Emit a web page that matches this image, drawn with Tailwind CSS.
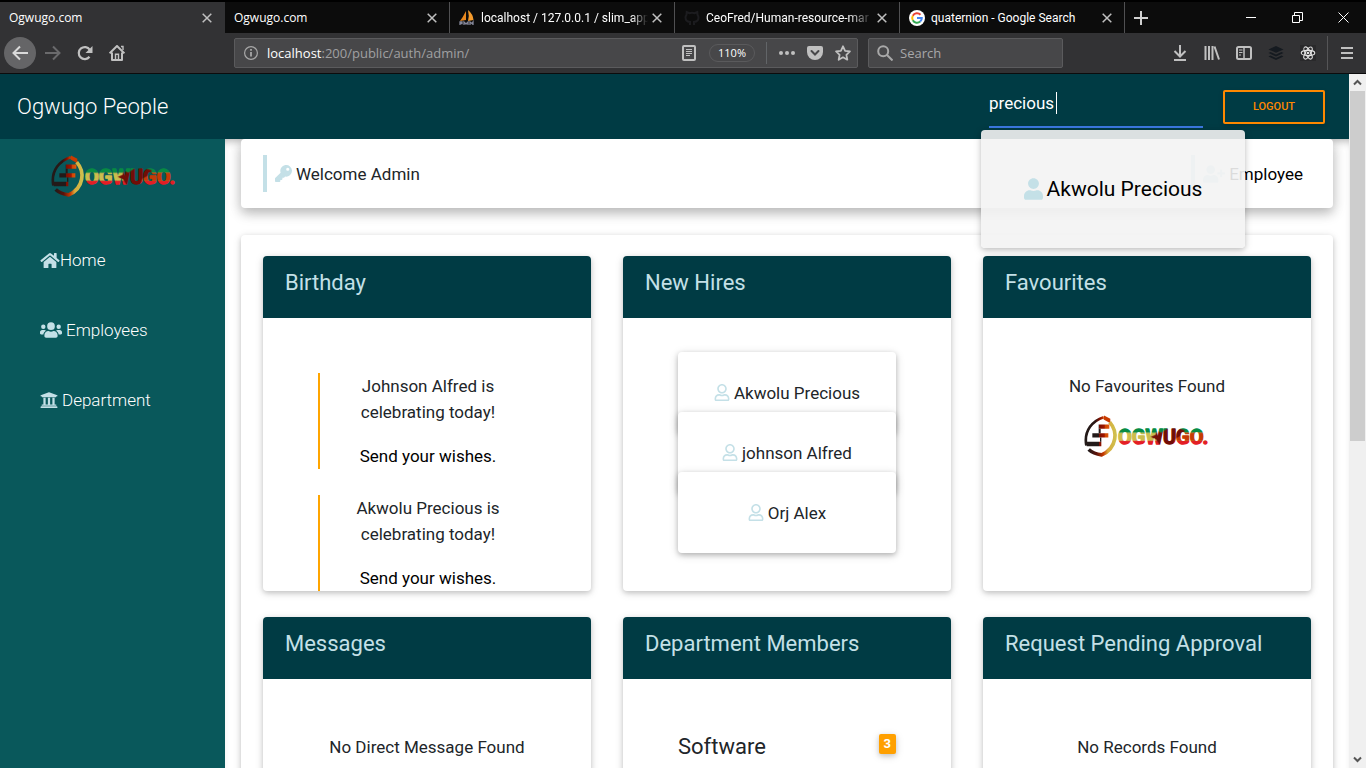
<!DOCTYPE html>
<html lang="en">
<head>
<meta charset="utf-8">
<meta name="viewport" content="width=device-width, initial-scale=1">
<title>Ogwugo.com</title>
<script src="https://cdn.jsdelivr.net/npm/@tailwindcss/browser@4"></script>
</head>
<body class="flex h-screen flex-col overflow-hidden bg-white font-['Roboto',sans-serif] text-[17px] leading-[26px] text-[#212529]">

<!-- Shared drawings -->
<svg class="absolute h-0 w-0" aria-hidden="true">
  <defs>
    <linearGradient id="arcLeft" x1="0" x2="1" y1="0" y2="0"><stop offset="0" stop-color="#231a19"/><stop offset=".55" stop-color="#2b1714"/><stop offset=".8" stop-color="#8c1000"/><stop offset="1" stop-color="#cf4200"/></linearGradient>
    <linearGradient id="arcRight" gradientUnits="userSpaceOnUse" x1="14" x2="94" y1="0" y2="0"><stop offset="0" stop-color="#231a19"/><stop offset=".3" stop-color="#5c1109"/><stop offset=".55" stop-color="#c63900"/><stop offset=".72" stop-color="#d9ab3d"/><stop offset="1" stop-color="#cfc04d"/></linearGradient>
    <linearGradient id="bar" gradientUnits="userSpaceOnUse" x1="10" x2="78" y1="0" y2="0"><stop offset="0" stop-color="#231a19"/><stop offset=".5" stop-color="#231a19"/><stop offset=".52" stop-color="#7c0e00"/><stop offset=".75" stop-color="#a01600"/><stop offset=".78" stop-color="#d04600"/><stop offset="1" stop-color="#e05a10"/></linearGradient>
    <pattern id="flag" patternUnits="userSpaceOnUse" width="400" height="130">
      <rect width="400" height="52" fill="#078a43"/>
      <rect y="52" width="400" height="24" fill="#ccbd4d"/>
      <rect y="76" width="400" height="54" fill="#e41d25"/>
      <path d="M262 52h138v24H262z" fill="#c53a05"/>
      <path d="M200 64l14-6 6-12 12 6 20-14 22-2 28 8-4 12-24 14-8 22-18 6-20-8-12-18z" fill="#720d06"/>
    </pattern>
    <symbol id="logo" viewBox="0 0 378 123">
      <path d="M59 5Q33 13 18 34Q1 58 7 90" fill="none" stroke="url(#arcLeft)" stroke-width="8"/>
      <path d="M60 0l19 10v13L59 12z" fill="#c93b00"/>
      <path d="M77 20Q97 43 92 71Q86 104 53 118Q28 115 14 102" fill="none" stroke="url(#arcRight)" stroke-width="11"/>
      <path d="M44 27h32v13H44zM25 53h48v13H25zM8 79h44v13H8z" fill="url(#bar)"/>
      <path d="M44 40h6v13h-6zM48 66h4v13h-4z" fill="#231a19"/>
      <text x="102" y="86" font-family="Roboto, Liberation Sans" font-weight="700" font-size="60" fill="url(#flag)" stroke="url(#flag)" stroke-width="4" stroke-linejoin="round">OGWUGO.</text>
    </symbol>
    <symbol id="close" viewBox="0 0 10 10"><path d="M.7.7l8.6 8.6M9.3.7L.7 9.3" fill="none" stroke="currentColor" stroke-width="1.5"/></symbol>
    <symbol id="user-outline" viewBox="0 0 448 512"><path fill="currentColor" d="M313.600 304c-28.700 0-42.500 16-89.600 16-47.100 0-60.800-16-89.600-16C60.200 304 0 364.200 0 438.400V464c0 26.500 21.500 48 48 48h352c26.500 0 48-21.500 48-48v-25.600c0-74.200-60.200-134.400-134.400-134.400zM400 464H48v-25.600c0-47.600 38.800-86.400 86.400-86.400 14.600 0 38.300 16 89.600 16 51.700 0 74.900-16 89.600-16 47.600 0 86.400 38.800 86.400 86.400V464zM224 288c79.500 0 144-64.500 144-144S303.500 0 224 0 80 64.500 80 144s64.500 144 144 144zm0-240c52.900 0 96 43.100 96 96s-43.100 96-96 96-96-43.100-96-96 43.100-96 96-96z"/></symbol>
    <symbol id="user" viewBox="0 0 448 512"><path fill="currentColor" d="M224 256c70.700 0 128-57.300 128-128S294.700 0 224 0 96 57.300 96 128s57.300 128 128 128zm89.600 32h-16.700c-22.200 10.200-46.900 16-72.900 16s-50.600-5.800-72.900-16h-16.700C60.200 288 0 348.200 0 422.400V464c0 26.500 21.500 48 48 48h352c26.500 0 48-21.500 48-48v-41.600c0-74.200-60.200-134.400-134.400-134.400z"/></symbol>
  </defs>
</svg>

<!-- Tab strip -->
<div class="flex h-[33px] shrink-0 border-t-2 border-black bg-[#0c0c0c] text-[12px] leading-[16px] text-white">
  <div class="flex w-[225px] items-center bg-[#323234] pr-[13px] pl-[9px] font-['Open_Sans',sans-serif]"><span class="flex-1">Ogwugo.com</span><button aria-label="Close tab" class="text-[#c0c0c0]"><svg class="size-[10px]"><use href="#close"/></svg></button></div>
  <div class="flex w-[225px] items-center border-r border-[#505052] pr-[12px] pl-[9px] font-['Open_Sans',sans-serif]"><span class="flex-1">Ogwugo.com</span><button aria-label="Close tab" class="text-[#c0c0c0]"><svg class="size-[10px]"><use href="#close"/></svg></button></div>
  <div class="flex w-[225px] items-center border-r border-[#505052] pr-[12px] pl-[9px]">
    <svg class="mr-[6px] size-4 shrink-0" viewBox="0 0 16 16"><path d="M7 1v9l-6 1Q4 7 7 1z" fill="#e8871e"/><path d="M9 0q5 4 5.500 10L9 11q1.500-5 0-11z" fill="#f59b2c"/><path d="M1 15v-3h2v1.500H1M5 15v-3l2 2 2-2v3M11 15v-3l2 1.500 1-1.500v3" fill="none" stroke="#85879a" stroke-width="1.300"/></svg>
    <span class="min-w-0 flex-1 whitespace-nowrap mask-r-from-90%">localhost / 127.0.0.1 / slim_app</span><button aria-label="Close tab" class="ml-1 text-[#c0c0c0]"><svg class="size-[10px]"><use href="#close"/></svg></button></div>
  <div class="flex w-[225px] items-center border-r border-[#505052] pr-[12px] pl-[9px]">
    <svg class="mr-[6px] size-4 shrink-0" viewBox="0 0 16 16"><path d="M6 15v-3c-4-.5-4.500-3-4.500-4.500 0-1 .4-2 1-2.700L2.700 2l2.600 1.200a9 9 0 0 1 5.400 0L13.300 2l.2 2.800c.6.700 1 1.700 1 2.700 0 1.500-.5 4-4.500 4.500v3" fill="none" stroke="#1c1c1f" stroke-width="2"/></svg>
    <span class="min-w-0 flex-1 whitespace-nowrap mask-r-from-85%">CeoFred/Human-resource-mar</span><button aria-label="Close tab" class="ml-1 text-[#c0c0c0]"><svg class="size-[10px]"><use href="#close"/></svg></button></div>
  <div class="flex w-[225px] items-center border-r border-[#505052] pr-[12px] pl-[9px]">
    <svg class="mr-[6px] size-4 shrink-0" viewBox="0 0 16 16"><circle cx="8" cy="8" r="8" fill="#fff"/><g fill="none" stroke-width="2"><path d="M11.500 4.700A4.800 4.800 0 0 0 3.800 5.700" stroke="#ea4335"/><path d="M3.800 5.700a4.800 4.800 0 0 0 0 4.600" stroke="#fbbc05"/><path d="M3.800 10.300a4.800 4.800 0 0 0 7.400 1.300" stroke="#34a853"/><path d="M11.200 11.600A4.700 4.700 0 0 0 12.800 8H8" stroke="#4285f4"/></g></svg>
    <span class="min-w-0 flex-1 whitespace-nowrap">quaternion - Google Search</span><button aria-label="Close tab" class="ml-1 text-[#c0c0c0]"><svg class="size-[10px]"><use href="#close"/></svg></button></div>
  <button aria-label="New tab" class="ml-[9px] text-[#d0d0d0]"><svg class="size-[14px]" viewBox="0 0 14 14"><path d="M7 0v14M0 7h14" stroke="currentColor" stroke-width="2"/></svg></button>
  <div class="ml-auto flex items-center gap-[35px] pr-[17px]">
    <button aria-label="Minimize"><svg class="size-[11px]" viewBox="0 0 11 11"><path d="M0 5.500h10" stroke="#fff"/></svg></button>
    <button aria-label="Restore"><svg class="size-[11px]" viewBox="0 0 11 11"><path d="M.5 3.500h7v7h-7zM2.500 3.500v-3h8v8h-3" fill="none" stroke="#fff"/></svg></button>
    <button aria-label="Close window"><svg class="size-[11px]" viewBox="0 0 11 11"><path d="M.5.5l10 10M10.500.5l-10 10" stroke="#fff"/></svg></button>
  </div>
</div>

<!-- Browser toolbar -->
<div class="flex h-[41px] shrink-0 items-center border-b border-[#0c0c0d] bg-[#323234] pl-1 font-['Open_Sans',sans-serif] text-[#c0c0c0]">
  <button aria-label="Back" class="grid size-8 place-items-center rounded-full bg-[#656567] text-[#dadada]"><svg class="size-4" viewBox="0 0 16 16"><path d="M16 8H1.500M8 1.500L1.500 8 8 14.500" fill="none" stroke="currentColor" stroke-width="2"/></svg></button>
  <button aria-label="Forward" class="ml-[9px] text-[#6a6a6c]"><svg class="size-4" viewBox="0 0 16 16"><path d="M0 8h14.500M8 1.500L14.500 8 8 14.500" fill="none" stroke="currentColor" stroke-width="2"/></svg></button>
  <button aria-label="Reload" class="ml-4"><svg class="size-4" viewBox="0 0 16 16"><path d="M12.500 11.800a6 6 0 1 1 .3-7" fill="none" stroke="currentColor" stroke-width="2.200"/><path d="M15.500 1v7h-7z" fill="currentColor"/></svg></button>
  <button aria-label="Home" class="ml-4"><svg class="size-4" viewBox="0 0 16 16"><path d="M.6 8.300L8 1l7.400 7.300M3 7.500V15h10V7.500" fill="none" stroke="currentColor" stroke-width="2" stroke-linejoin="round"/><path d="M6.500 14.500V9.300h3v5.200M12 1.500h2V5" fill="none" stroke="currentColor" stroke-width="1.400"/></svg></button>
  <div class="ml-[109px] flex h-[30px] min-w-0 flex-1 items-center rounded-xs border border-[#5b5b5d] bg-[#474749] pr-[6px] pl-[9px]">
    <svg class="size-[14px] shrink-0" viewBox="0 0 14 14" fill="none" stroke="#a8a8a8"><circle cx="7" cy="7" r="6.400" stroke-width="1.200"/><path d="M7 6v4.500M7 3v1.700" stroke-width="1.800"/></svg>
    <a href="#" class="ml-[9px] flex-1 text-[13px] leading-[18px] text-[#a0a0a2]"><span class="text-white">localhost</span>:200/public/auth/admin/</a>
    <button aria-label="Reader view"><svg class="size-4" viewBox="0 0 16 16" fill="none" stroke="currentColor"><rect x="2" y="1" width="12" height="14" rx="1" stroke-width="2"/><path d="M5 4.500h6M5 6.500h6M5 8.500h6M5 10.500h4"/></svg></button>
    <button class="ml-3 h-[18px] rounded-full border border-[#5a5a5c] px-[8px] text-[11px] leading-[16px] text-white">110%</button>
    <span class="ml-[11px] h-[22px] w-px bg-[#626568]"></span>
    <button aria-label="Page actions" class="ml-3"><svg class="size-4" viewBox="0 0 16 16" fill="currentColor"><circle cx="2" cy="8" r="2"/><circle cx="8" cy="8" r="2"/><circle cx="14" cy="8" r="2"/></svg></button>
    <button aria-label="Save to Pocket" class="ml-3"><svg class="size-4" viewBox="0 0 16 16"><path d="M2 1h12q2 0 2 2v4a8 8 0 0 1-16 0V3q0-2 2-2z" fill="currentColor"/><path d="M4.500 6L8 9.500 11.500 6" fill="none" stroke="#474749" stroke-width="2" stroke-linecap="round"/></svg></button>
    <button aria-label="Bookmark" class="ml-3"><svg class="size-4" viewBox="0 0 16 16"><path d="M8 1.300l2.100 4.500 4.800.6-3.500 3.400.9 4.900L8 12.300l-4.300 2.400.9-4.900L1.100 6.400l4.800-.6z" fill="none" stroke="currentColor" stroke-width="1.800" stroke-linejoin="round"/></svg></button>
  </div>
  <label class="ml-[10px] flex h-[30px] w-[195px] items-center rounded-xs border border-[#5b5b5d] bg-[#474749] pl-2">
    <svg class="size-4 shrink-0" viewBox="0 0 16 16" fill="none" stroke="#a8a8a8" stroke-width="2"><circle cx="6.200" cy="6.200" r="5"/><path d="M10 10l5.500 5.500"/></svg>
    <input aria-label="Search the web" placeholder="Search" class="ml-[7px] w-36 bg-transparent text-[13px] leading-[18px] outline-none placeholder:text-[#a8a8aa]">
  </label>
  <div class="ml-[109px] flex items-center gap-4">
    <button aria-label="Downloads"><svg class="size-4" viewBox="0 0 16 16"><path d="M8 0v11M2.500 6L8 11.500 13.500 6M2 15h12" fill="none" stroke="currentColor" stroke-width="2"/></svg></button>
    <button aria-label="Library"><svg class="size-4" viewBox="0 0 16 16"><path d="M1.500 1v14M5 1v14M8.500 1v14M10.500 1.500l4.500 13" fill="none" stroke="currentColor" stroke-width="2"/></svg></button>
    <button aria-label="Sidebars"><svg class="size-4" viewBox="0 0 16 16" fill="none" stroke="currentColor"><rect x="1" y="2" width="14" height="12" rx="1.500" stroke-width="2"/><path d="M8 2v12" stroke-width="1.500"/><path d="M3 5h3.500M3 7.500h3.500M3 10h2"/></svg></button>
    <button aria-label="Buffer"><svg class="size-4" viewBox="0 0 16 16" fill="#151a20"><path d="M8 1l7.500 3.400L8 7.800.5 4.400z"/><path d="M.5 8l2-1L8 9.500 13.500 7l2 1L8 11.400zM.5 11.500l2-1L8 13l5.500-2.500 2 1L8 15z"/></svg></button>
    <button aria-label="React tools" class="bg-[#29292b]"><svg class="size-4" viewBox="0 0 16 16" fill="none" stroke="#e4e4e4" stroke-width="1.100"><ellipse cx="8" cy="8" rx="6.800" ry="2.600"/><ellipse cx="8" cy="8" rx="6.800" ry="2.600" transform="rotate(60 8 8)"/><ellipse cx="8" cy="8" rx="6.800" ry="2.600" transform="rotate(120 8 8)"/><circle cx="8" cy="8" r=".8" fill="#fff"/></svg></button>
  </div>
  <span class="ml-[11px] h-[34px] w-px bg-[#555557]"></span>
  <button aria-label="Menu" class="mr-3 ml-3"><svg class="size-[14px]" viewBox="0 0 14 14"><path d="M1 2h12M1 7h12M1 12h12" stroke="currentColor" stroke-width="2"/></svg></button>
</div>

<div class="flex min-h-0 flex-1">
  <div class="flex min-w-0 flex-1 flex-col">
    <!-- App bar -->
    <header class="relative z-10 flex h-[65px] shrink-0 items-center bg-[#003b44] pr-6 pl-[17px]">
      <a href="#" class="flex-1 text-[22px] font-light text-white">Ogwugo People</a>
      <div class="relative w-[214px] self-start">
        <input aria-label="Search people" value="precious" class="block h-[54px] w-full border-b-2 border-[#3b78e0] bg-transparent pt-[6px] text-[17px] text-white outline-none">
        <span class="absolute top-[18px] left-[67px] h-[22px] w-px bg-white"></span>
        <a href="#" class="absolute top-[56px] -left-2 flex h-[118px] w-[264px] items-center justify-center gap-1 rounded bg-[#f3f3f3]/90 text-[21px] text-black shadow-[0_2px_5px_rgba(0,0,0,.16),0_2px_10px_rgba(0,0,0,.12)]">
          <svg class="h-[22px] w-[19px] text-[#c4e0e7]"><use href="#user"/></svg>Akwolu Precious
        </a>
      </div>
      <button class="ml-5 h-[34px] w-[102px] rounded-xs border-2 border-[#ff8800] text-[11px] font-medium text-[#ff8800] shadow-[0_2px_5px_rgba(0,0,0,.16)]">LOGOUT</button>
    </header>

    <div class="flex min-h-0 flex-1">
      <!-- Side navigation -->
      <aside class="w-[225px] shrink-0 bg-[#09585b] pt-4">
        <svg class="ml-[51px] h-[42px] w-[126px]" role="img" aria-label="Ogwugo"><use href="#logo"/></svg>
        <nav class="mt-7 pl-10 font-light text-white">
          <a href="#" class="flex h-[70px] items-center"><svg class="h-[17px] w-5 text-[#c4e0e7]" viewBox="0 0 576 512" fill="currentColor"><path d="M280.400 148.300L96 300.100V464a16 16 0 0 0 16 16l112-.3a16 16 0 0 0 16-16V368a16 16 0 0 1 16-16h64a16 16 0 0 1 16 16v95.600a16 16 0 0 0 16 16.100L464 480a16 16 0 0 0 16-16V300L295.700 148.300a12.200 12.200 0 0 0-15.300 0zM571.600 251.500L488 182.600V44a12 12 0 0 0-12-12h-56a12 12 0 0 0-12 12v72.600L318.500 43a48 48 0 0 0-61 0L4.300 251.500a12 12 0 0 0-1.600 16.900l25.500 31A12 12 0 0 0 45.200 301l235.200-193.700a12.200 12.200 0 0 1 15.300 0L530.900 301a12 12 0 0 0 16.900-1.600l25.500-31a12 12 0 0 0-1.700-16.900z"/></svg>Home</a>
          <a href="#" class="flex h-[70px] items-center gap-1"><svg class="h-[18px] w-[22px] text-[#c4e0e7]" viewBox="0 0 640 512" fill="currentColor"><path d="M96 224a64 64 0 1 0 0-128 64 64 0 0 0 0 128zm448 0a64 64 0 1 0 0-128 64 64 0 0 0 0 128zm32 32h-64c-17.600 0-33.500 7.100-45.100 18.600 40.300 22.100 68.900 62 75.100 109.400h66c17.700 0 32-14.300 32-32v-32c0-35.300-28.700-64-64-64zm-256 0a112 112 0 1 0 0-224 112 112 0 0 0 0 224zm76.800 32h-8.300c-20.800 10-43.900 16-68.500 16s-47.600-6-68.500-16h-8.300C179.600 288 128 339.600 128 403.200V432c0 26.500 21.500 48 48 48h288c26.500 0 48-21.500 48-48v-28.800c0-63.600-51.600-115.200-115.200-115.200zm-223.700-13.400C161.500 263.100 145.600 256 128 256H64c-35.300 0-64 28.700-64 64v32c0 17.700 14.300 32 32 32h65.900c6.300-47.400 34.900-87.300 75.200-109.400z"/></svg>Employees</a>
          <a href="#" class="flex h-[70px] items-center gap-1"><svg class="size-[18px] text-[#c4e0e7]" viewBox="0 0 512 512" fill="currentColor"><path d="M496 128v16a8 8 0 0 1-8 8h-24v12c0 6.600-5.400 12-12 12H60c-6.600 0-12-5.400-12-12v-12H24a8 8 0 0 1-8-8v-16a8 8 0 0 1 4.900-7.400l232-88a8 8 0 0 1 6.100 0l232 88A8 8 0 0 1 496 128zm-24 304H40c-13.300 0-24 10.700-24 24v16a8 8 0 0 0 8 8h464a8 8 0 0 0 8-8v-16c0-13.300-10.700-24-24-24zM96 192v192H60c-6.600 0-12 5.400-12 12v20h416v-20c0-6.600-5.400-12-12-12h-36V192h-64v192h-64V192h-64v192h-64V192H96z"/></svg>Department</a>
        </nav>
      </aside>

      <!-- Dashboard -->
      <main class="min-w-0 flex-1 overflow-hidden px-4 shadow-[inset_0_7px_8px_-5px_rgba(0,0,0,.3)]">
        <section class="flex justify-between rounded bg-white px-[22px] py-4 shadow-[0_5px_11px_rgba(0,0,0,.18),0_4px_15px_rgba(0,0,0,.15)]">
          <div class="flex h-[37px] items-center gap-1 border-l-4 border-[#c4e0e7] px-2"><svg class="size-[17px] text-[#c4e0e7]" viewBox="0 0 512 512" fill="currentColor"><path d="M512 176a176 176 0 0 1-208.900 173L279 376a24 24 0 0 1-18 8h-37v40a24 24 0 0 1-24 24h-40v40a24 24 0 0 1-24 24H24a24 24 0 0 1-24-24v-78a24 24 0 0 1 7-17l161.800-161.800A176 176 0 1 1 512 176zm-176-48a48 48 0 1 0 96 0 48 48 0 0 0-96 0z"/></svg>Welcome Admin</div>
          <a href="#" class="flex h-[37px] items-center gap-1 border-l-4 border-[#c4e0e7] px-2 text-black"><svg class="h-[18px] w-[22px] text-[#c4e0e7]" viewBox="0 0 640 512" fill="currentColor"><path d="M624 208h-64v-64a16 16 0 0 0-16-16h-32a16 16 0 0 0-16 16v64h-64a16 16 0 0 0-16 16v32a16 16 0 0 0 16 16h64v64a16 16 0 0 0 16 16h32a16 16 0 0 0 16-16v-64h64a16 16 0 0 0 16-16v-32a16 16 0 0 0-16-16zM224 256a128 128 0 1 0 0-256 128 128 0 0 0 0 256zm89.600 32h-16.700a174 174 0 0 1-145.800 0h-16.700C60.200 288 0 348.200 0 422.400V464c0 26.500 21.500 48 48 48h352c26.500 0 48-21.500 48-48v-41.600c0-74.200-60.200-134.400-134.400-134.400z"/></svg>Employee</a>
        </section>

        <section class="mt-[27px] grid grid-cols-3 gap-x-8 gap-y-[26px] rounded bg-white px-[22px] py-[21px] shadow-[0_2px_5px_rgba(0,0,0,.16),0_2px_10px_rgba(0,0,0,.12)]">
          <article class="flex h-[335px] flex-col overflow-hidden rounded bg-white shadow-[0_2px_5px_rgba(0,0,0,.16),0_2px_10px_rgba(0,0,0,.12)]">
            <h2 class="h-[62px] shrink-0 bg-[#003b44] px-[22px] pt-[14px] text-[22px] text-[#c4e0e7]">Birthday</h2>
            <div class="flex flex-col gap-[26px] p-[55px] text-center">
              <div class="border-l-2 border-[#ffa500]"><p class="mx-auto mb-[18px] w-[180px]">Johnson Alfred is celebrating today!</p><a href="#" class="block text-black">Send your wishes.</a></div>
              <div class="border-l-2 border-[#ffa500]"><p class="mx-auto mb-[18px] w-[180px]">Akwolu Precious is celebrating today!</p><a href="#" class="block text-black">Send your wishes.</a></div>
            </div>
          </article>
          <article class="h-[335px] overflow-hidden rounded bg-white shadow-[0_2px_5px_rgba(0,0,0,.16),0_2px_10px_rgba(0,0,0,.12)]">
            <h2 class="h-[62px] bg-[#003b44] px-[22px] pt-[14px] text-[22px] text-[#c4e0e7]">New Hires</h2>
            <div class="px-[55px] pt-[34px]">
              <div class="flex h-[81px] items-center justify-center gap-1 rounded bg-white shadow-[0_2px_5px_rgba(0,0,0,.2),0_2px_10px_rgba(0,0,0,.16)]"><svg class="h-[17px] w-4 text-[#c4e0e7]"><use href="#user-outline"/></svg>Akwolu Precious</div>
              <div class="relative -mt-[21px] flex h-[81px] items-center justify-center gap-1 rounded bg-white shadow-[0_2px_5px_rgba(0,0,0,.2),0_2px_10px_rgba(0,0,0,.16)]"><svg class="h-[17px] w-4 text-[#c4e0e7]"><use href="#user-outline"/></svg>johnson Alfred</div>
              <div class="relative -mt-[21px] flex h-[81px] items-center justify-center gap-1 rounded bg-white shadow-[0_2px_5px_rgba(0,0,0,.2),0_2px_10px_rgba(0,0,0,.16)]"><svg class="h-[17px] w-4 text-[#c4e0e7]"><use href="#user-outline"/></svg>Orj Alex</div>
            </div>
          </article>
          <article class="h-[335px] overflow-hidden rounded bg-white shadow-[0_2px_5px_rgba(0,0,0,.16),0_2px_10px_rgba(0,0,0,.12)]">
            <h2 class="h-[62px] bg-[#003b44] px-[22px] pt-[14px] text-[22px] text-[#c4e0e7]">Favourites</h2>
            <div class="flex flex-col items-center gap-4 pt-[55px]"><p>No Favourites Found</p><svg class="h-[42px] w-[126px]" role="img" aria-label="Ogwugo"><use href="#logo"/></svg></div>
          </article>
          <article class="h-[335px] overflow-hidden rounded bg-white shadow-[0_2px_5px_rgba(0,0,0,.16),0_2px_10px_rgba(0,0,0,.12)]">
            <h2 class="h-[62px] bg-[#003b44] px-[22px] pt-[14px] text-[22px] text-[#c4e0e7]">Messages</h2>
            <p class="pt-[55px] text-center">No Direct Message Found</p>
          </article>
          <article class="h-[335px] overflow-hidden rounded bg-white shadow-[0_2px_5px_rgba(0,0,0,.16),0_2px_10px_rgba(0,0,0,.12)]">
            <h2 class="h-[62px] bg-[#003b44] px-[22px] pt-[14px] text-[22px] text-[#c4e0e7]">Department Members</h2>
            <div class="flex items-start justify-between px-[55px] pt-[55px]"><h3 class="text-[22px]">Software</h3><span class="rounded-xs bg-[#ffa000] px-[5px] text-[13px] leading-[20px] font-bold text-white shadow-[0_2px_5px_rgba(0,0,0,.16),0_2px_10px_rgba(0,0,0,.12)]">3</span></div>
          </article>
          <article class="h-[335px] overflow-hidden rounded bg-white shadow-[0_2px_5px_rgba(0,0,0,.16),0_2px_10px_rgba(0,0,0,.12)]">
            <h2 class="h-[62px] bg-[#003b44] px-[22px] pt-[14px] text-[22px] text-[#c4e0e7]">Request Pending Approval</h2>
            <p class="pt-[55px] text-center">No Records Found</p>
          </article>
        </section>
      </main>
    </div>
  </div>

  <!-- Page scrollbar -->
  <div class="flex w-[17px] shrink-0 flex-col items-center justify-between bg-[#f0f0f0]" aria-hidden="true">
    <svg class="h-[17px] w-[17px] shrink-0" viewBox="0 0 17 17"><path d="M5 10.500L8.500 7l3.500 3.500" fill="none" stroke="#555" stroke-width="2"/></svg>
    <div class="min-h-0 w-full flex-1 px-px"><div class="h-[53%] bg-[#cdcdcd]"></div></div>
    <svg class="h-[17px] w-[17px] shrink-0" viewBox="0 0 17 17"><path d="M5 6.500L8.500 10 12 6.500" fill="none" stroke="#555" stroke-width="2"/></svg>
  </div>
</div>
</body>
</html>
